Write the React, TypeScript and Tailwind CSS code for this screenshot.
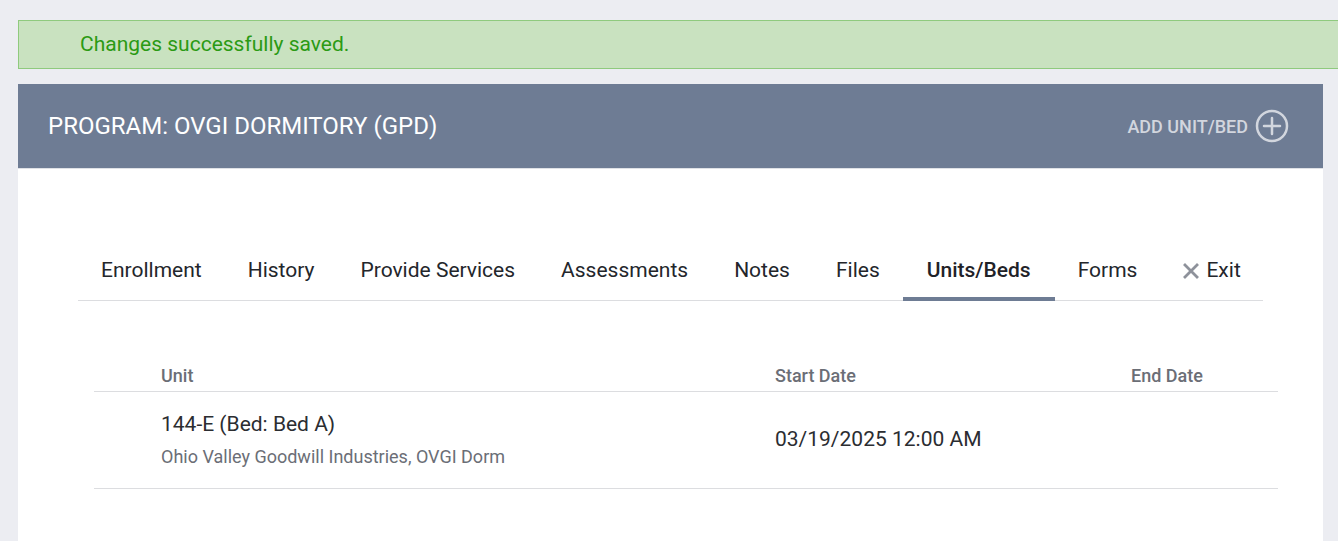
const TABS = [
  'Enrollment',
  'History',
  'Provide Services',
  'Assessments',
  'Notes',
  'Files',
  'Units/Beds',
  'Forms',
];

const ACTIVE_TAB = 'Units/Beds';

function PlusCircle() {
  return (
    <svg className="w-[34px] h-[34px]" viewBox="0 0 34 34" fill="none" stroke="currentColor">
      <circle cx="17" cy="17" r="15" strokeWidth={2.5} />
      <path d="M17 9v16M9 17h16" strokeWidth={2.5} strokeLinecap="round" />
    </svg>
  );
}

function ExitIcon() {
  return (
    <svg className="w-[16px] h-[16px] text-[#8e929b]" viewBox="0 0 16 16" fill="none" stroke="currentColor">
      <path d="M2 2l12 12M14 2L2 14" strokeWidth={2.8} strokeLinecap="square" />
    </svg>
  );
}

export default function App() {
  return (
    <div
      className="min-h-[541px] bg-[#ecedf2] pt-5 pl-[18px] overflow-hidden"
      style={{ fontFamily: 'Roboto, "Liberation Sans", sans-serif' }}
    >
      <div className="h-[49px] bg-[#c9e2c0] border border-[#8fca7e] border-r-0 flex items-center pl-[61px]">
        <span className="text-[21px] text-[#2b9a14]">Changes successfully saved.</span>
      </div>

      <div className="mt-[15px] mr-[15px] bg-white">
        <div className="h-[85px] bg-[#6e7c94] border-b border-[#dfe1e6] flex items-center justify-between pl-[30px] pr-[34px]">
          <h1 className="text-[24px] text-white">PROGRAM: OVGI DORMITORY (GPD)</h1>
          <button className="flex items-center gap-[7px] text-[#d2d6de]">
            <span className="text-[18px] font-medium">ADD UNIT/BED</span>
            <PlusCircle />
          </button>
        </div>

        <div className="pt-[76px] pb-[52px]">
          <div className="mx-[60px] flex border-b border-[#dcdde0]">
            {TABS.map((tab) => (
              <div
                key={tab}
                className={`shrink-0 whitespace-nowrap h-[56px] flex items-center text-[21px] border-b-4 -mb-px ${
                  tab === ACTIVE_TAB
                    ? 'px-[24px] border-[#6e7c94] text-[#1f2228] font-medium'
                    : 'px-[23px] border-transparent text-[#23262b]'
                }`}
              >
                {tab}
              </div>
            ))}
            <div className="shrink-0 whitespace-nowrap pl-[23px] pr-[22px] h-[56px] flex items-center gap-[7px] text-[21px] text-[#23262b] border-b-4 border-transparent -mb-px">
              <ExitIcon />
              Exit
            </div>
          </div>

          <div className="mt-[43px] ml-[76px] mr-[45px]">
            <div className="flex h-[48px] items-center border-b border-[#dcdde0] text-[18px] font-medium text-[#6b6e76] pt-[15px]">
              <div className="w-[681px] pl-[67px]">Unit</div>
              <div className="w-[356px]">Start Date</div>
              <div>End Date</div>
            </div>
            <div className="flex h-[97px] items-center border-b border-[#dcdde0]">
              <div className="w-[681px] pl-[67px]">
                <div className="text-[21px] text-[#2b2d31] leading-[26px]">144-E (Bed: Bed A)</div>
                <div className="text-[18px] text-[#6b6e76] mt-[6px]">Ohio Valley Goodwill Industries, OVGI Dorm</div>
              </div>
              <div className="w-[356px] text-[21px] text-[#2b2d31]">03/19/2025 12:00 AM</div>
              <div />
            </div>
          </div>
        </div>
      </div>
    </div>
  );
}
